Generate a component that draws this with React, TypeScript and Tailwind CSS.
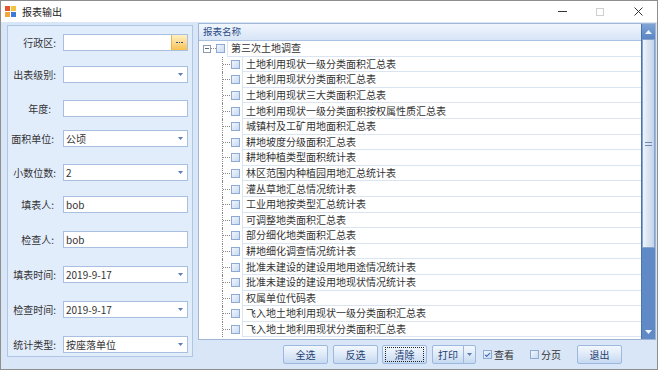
import { Check } from 'lucide-react'

const fields = [
  { label: '行政区:', value: '', kind: 'browse', row: 'mt-[8px]', pad: 'pr-[7px]' },
  { label: '出表级别:', value: '', kind: 'select', row: 'mt-[15px]', pad: 'pr-[7px]' },
  { label: '年度:', value: '', kind: 'text', row: 'mt-[17px]', pad: 'pr-[12px]' },
  { label: '面积单位:', value: '公顷', kind: 'select', row: 'mt-[13px]', pad: 'pr-[9px]' },
  { label: '小数位数:', value: '2', kind: 'select', row: 'mt-[17px]', pad: 'pr-[7px]' },
  { label: '填表人:', value: 'bob', kind: 'text', row: 'mt-[15px]', pad: 'pr-[9px]' },
  { label: '检查人:', value: 'bob', kind: 'text', row: 'mt-[18px]', pad: 'pr-[9px]' },
  { label: '填表时间:', value: '2019-9-17', kind: 'select', row: 'mt-[18px]', pad: 'pr-[7px]' },
  { label: '检查时间:', value: '2019-9-17', kind: 'select', row: 'mt-[18px]', pad: 'pr-[7px]' },
  { label: '统计类型:', value: '按座落单位', kind: 'select', row: 'mt-[18px]', pad: 'pr-[7px]' },
]

const reports = [
  '土地利用现状一级分类面积汇总表',
  '土地利用现状分类面积汇总表',
  '土地利用现状三大类面积汇总表',
  '土地利用现状一级分类面积按权属性质汇总表',
  '城镇村及工矿用地面积汇总表',
  '耕地坡度分级面积汇总表',
  '耕地种植类型面积统计表',
  '林区范围内种植园用地汇总统计表',
  '灌丛草地汇总情况统计表',
  '工业用地按类型汇总统计表',
  '可调整地类面积汇总表',
  '部分细化地类面积汇总表',
  '耕地细化调查情况统计表',
  '批准未建设的建设用地用途情况统计表',
  '批准未建设的建设用地现状情况统计表',
  '权属单位代码表',
  '飞入地土地利用现状一级分类面积汇总表',
  '飞入地土地利用现状分类面积汇总表',
]

const DropArrow = () => (
  <svg width="5" height="3" viewBox="0 0 5 3" className="mr-[4px] shrink-0">
    <path d="M0 0h5L2.5 3z" fill="#5a7db3" />
  </svg>
)

const Box = ({ checked = false }: { checked?: boolean }) => (
  <div className="flex h-[9px] w-[9px] shrink-0 items-center justify-center border border-[#8eaad3] bg-gradient-to-br from-[#f1f6fc] to-[#c9daf0]">
    {checked && <Check size={8} strokeWidth={3.5} className="text-[#2a5db0]" />}
  </div>
)

const Btn = ({ text, focus = false, cls = '' }: { text: string; focus?: boolean; cls?: string }) => (
  <div
    className={`flex h-[19px] w-[45px] items-center justify-center rounded-[2px] border border-[#9db8de] bg-gradient-to-b from-[#f2f7fd] via-[#dfeaf8] to-[#c5d9f1] text-[#1f3f72] ${cls}`}
  >
    {focus ? (
      <span className="flex h-[15px] w-[39px] items-center justify-center border border-dotted border-[#222]">{text}</span>
    ) : (
      text
    )}
  </div>
)

export default function App() {
  return (
    <div className="h-[372px] w-[658px] bg-white font-['Noto_Sans_CJK_SC','Liberation_Sans',sans-serif] text-[10px] leading-none text-[#333]">
      <div className="flex h-[370px] flex-col border border-[#8e8e8e] bg-[#d9e6f7]">
        {/* title bar */}
        <div className="flex h-[21px] shrink-0 items-center bg-white">
          <svg width="11" height="11" viewBox="0 0 11 11" className="ml-[4px]">
            <rect x="0" y="0" width="5" height="5" fill="#e2552d" />
            <rect x="6" y="0" width="5" height="5" fill="#f4c23f" />
            <rect x="0" y="6" width="5" height="5" fill="#f2a83a" />
            <rect x="6" y="6" width="5" height="5" fill="#3d7bd6" />
          </svg>
          <span className="ml-[6px] text-[#222]">报表输出</span>
          <div className="flex-1" />
          <div className="flex h-full w-[38px] items-center justify-center">
            <div className="h-px w-[9px] bg-[#333]" />
          </div>
          <div className="flex h-full w-[38px] items-center justify-center">
            <div className="h-[8px] w-[8px] border border-[#cfcfcf]" />
          </div>
          <div className="flex h-full w-[38px] items-center justify-center">
            <svg width="9" height="9" viewBox="0 0 9 9">
              <path d="M0.5 0.5l8 8M8.5 0.5l-8 8" stroke="#333" strokeWidth="1" />
            </svg>
          </div>
        </div>

        <div className="flex flex-1">
          {/* left form */}
          <div className="ml-[6px] mt-[3px] flex h-[332px] w-[186px] flex-col border border-[#afc6e5] bg-[#e2edfc]">
            {fields.map((f) => (
              <div key={f.label} className={`flex h-[17px] items-center ${f.row}`}>
                <div className={`w-[55px] shrink-0 text-right ${f.pad}`}>{f.label}</div>
                <div className="flex h-[17px] w-[125px] items-center border border-[#a9bfdf] bg-white">
                  <span className="flex-1 pl-[2px]">{f.value}</span>
                  {f.kind === 'select' && <DropArrow />}
                  {f.kind === 'browse' && (
                    <div className="flex h-full w-[16px] items-center justify-center gap-[1px] border-l border-[#e7b553] bg-gradient-to-b from-[#fff1c4] to-[#f7c14c]">
                      <span className="h-[1.5px] w-[1.5px] bg-[#35507c]" />
                      <span className="h-[1.5px] w-[1.5px] bg-[#35507c]" />
                      <span className="h-[1.5px] w-[1.5px] bg-[#35507c]" />
                    </div>
                  )}
                </div>
              </div>
            ))}
          </div>

          {/* right side */}
          <div className="ml-[5px] flex w-[458px] flex-col">
            <div className="mt-[1px] flex h-[317px] border border-[#9fb6d6] bg-white">
              <div className="flex flex-1 flex-col overflow-hidden">
                <div className="flex h-[17px] shrink-0 items-center border-b border-[#a9c2e2] bg-gradient-to-b from-[#f1f6fd] to-[#d7e5f7] pl-[4px] text-[9.5px] text-[#2d4f86]">
                  报表名称
                </div>
                <div className="flex h-[15.6px] shrink-0 items-center">
                  <div className="ml-[4px] flex h-[8px] w-[8px] items-center justify-center border border-[#8d9bb0] bg-white">
                    <div className="h-px w-[4px] bg-[#55657c]" />
                  </div>
                  <div className="w-[5px] border-t border-dotted border-[#888]" />
                  <Box />
                  <div className="ml-[2px] flex h-full flex-1 items-center border-b border-l border-[#dbe5f2] pl-[3px]">第三次土地调查</div>
                </div>
                {reports.map((r) => (
                  <div key={r} className="flex h-[15.6px] shrink-0 items-center">
                    <div className="w-[23px] shrink-0" />
                    <div className="flex h-full w-[8px] shrink-0 items-center border-l border-dotted border-[#888]">
                      <div className="w-full border-t border-dotted border-[#888]" />
                    </div>
                    <div className="ml-[1px]">
                      <Box />
                    </div>
                    <div className="ml-[2px] flex h-full flex-1 items-center border-b border-l border-[#dbe5f2] pl-[3px]">{r}</div>
                  </div>
                ))}
              </div>
              {/* scrollbar */}
              <div className="flex w-[14px] shrink-0 flex-col border-l border-[#4a73b0] bg-[#5f8ac6]">
                <div className="flex h-[15px] items-center justify-center bg-gradient-to-b from-[#7fa3d6] to-[#5b86c4]">
                  <svg width="7" height="4" viewBox="0 0 7 4">
                    <path d="M0 4h7L3.5 0z" fill="#eef4fc" />
                  </svg>
                </div>
                <div className="flex h-[209px] items-center justify-center border border-[#86a3cc] bg-gradient-to-r from-[#eef3fa] via-[#d9e4f2] to-[#c2d3ea]">
                  <div className="flex flex-col gap-[2px]">
                    <div className="h-px w-[7px] bg-[#6d8bb8]" />
                    <div className="h-px w-[7px] bg-[#6d8bb8]" />
                  </div>
                </div>
                <div className="flex-1" />
                <div className="flex h-[15px] items-center justify-center">
                  <svg width="7" height="4" viewBox="0 0 7 4">
                    <path d="M0 0h7L3.5 4z" fill="#eef4fc" />
                  </svg>
                </div>
              </div>
            </div>

            {/* buttons */}
            <div className="mt-[5px] flex h-[19px] items-center pl-[85px]">
              <Btn text="全选" cls="w-[44px]" />
              <Btn text="反选" cls="ml-[5px]" />
              <Btn text="清除" focus cls="ml-[4px]" />
              <div className="ml-[5px] flex h-[19px] w-[44px] rounded-[2px] border border-[#9db8de] bg-gradient-to-b from-[#f2f7fd] via-[#dfeaf8] to-[#c5d9f1] text-[#1f3f72]">
                <div className="flex w-[31px] items-center justify-center border-r border-[#9db8de]">打印</div>
                <div className="flex flex-1 items-center justify-center">
                  <svg width="5" height="3" viewBox="0 0 5 3">
                    <path d="M0 0h5L2.5 3z" fill="#5a7db3" />
                  </svg>
                </div>
              </div>
              <div className="ml-[7px] flex items-center">
                <Box checked />
                <span className="ml-[2px]">查看</span>
              </div>
              <div className="ml-[16px] flex items-center">
                <Box />
                <span className="ml-[2px]">分页</span>
              </div>
              <Btn text="退出" cls="ml-[16px]" />
            </div>
          </div>
        </div>
      </div>
    </div>
  )
}
